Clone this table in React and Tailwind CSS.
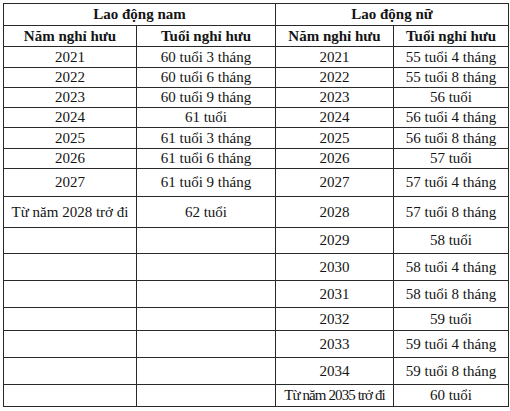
import React from "react";

const male = [
  ["2021", "60 tuổi 3 tháng"],
  ["2022", "60 tuổi 6 tháng"],
  ["2023", "60 tuổi 9 tháng"],
  ["2024", "61 tuổi"],
  ["2025", "61 tuổi 3 tháng"],
  ["2026", "61 tuổi 6 tháng"],
  ["2027", "61 tuổi 9 tháng"],
  ["Từ năm 2028 trở đi", "62 tuổi"],
];

const female = [
  ["2021", "55 tuổi 4 tháng"],
  ["2022", "55 tuổi 8 tháng"],
  ["2023", "56 tuổi"],
  ["2024", "56 tuổi 4 tháng"],
  ["2025", "56 tuổi 8 tháng"],
  ["2026", "57 tuổi"],
  ["2027", "57 tuổi 4 tháng"],
  ["2028", "57 tuổi 8 tháng"],
  ["2029", "58 tuổi"],
  ["2030", "58 tuổi 4 tháng"],
  ["2031", "58 tuổi 8 tháng"],
  ["2032", "59 tuổi"],
  ["2033", "59 tuổi 4 tháng"],
  ["2034", "59 tuổi 8 tháng"],
  ["Từ năm 2035 trở đi", "60 tuổi"],
];

function Cell({ children, className = "" }) {
  return (
    <div className={"bg-white flex items-center justify-center whitespace-nowrap " + className}>
      {children}
    </div>
  );
}

export default function App() {
  const rows = [];
  for (let i = 0; i < 15; i++) {
    const m = male[i];
    const f = female[i];
    const last = i === 14;
    rows.push(
      <React.Fragment key={i}>
        <Cell>{m ? m[0] : ""}</Cell>
        <Cell>{m ? m[1] : ""}</Cell>
        <Cell className={last ? "tracking-[-0.9px]" : ""}>{f[0]}</Cell>
        <Cell>{f[1]}</Cell>
      </React.Fragment>
    );
  }
  return (
    <div className="w-[510px] h-[411px] bg-white pt-[3px] pl-[3px] font-['Liberation_Serif','Times_New_Roman',serif]">
      <div className="grid w-[506px] bg-[#2a2a2a] p-px gap-px text-[15px] leading-none text-[#141414]">
        <div className="grid grid-cols-[132px_138px_117px_114px] grid-rows-[21px_20px_20px_19px_19px_19px_20px_19px_27px_30px_25px_26px_26px_22px_26px_26px_21px] gap-px">
          <Cell className="col-span-2 font-bold">Lao động nam</Cell>
          <Cell className="col-span-2 font-bold">Lao động nữ</Cell>
          <Cell className="font-bold">Năm nghỉ hưu</Cell>
          <Cell className="font-bold">Tuổi nghỉ hưu</Cell>
          <Cell className="font-bold">Năm nghỉ hưu</Cell>
          <Cell className="font-bold">Tuổi nghỉ hưu</Cell>
          {rows}
        </div>
      </div>
    </div>
  );
}
